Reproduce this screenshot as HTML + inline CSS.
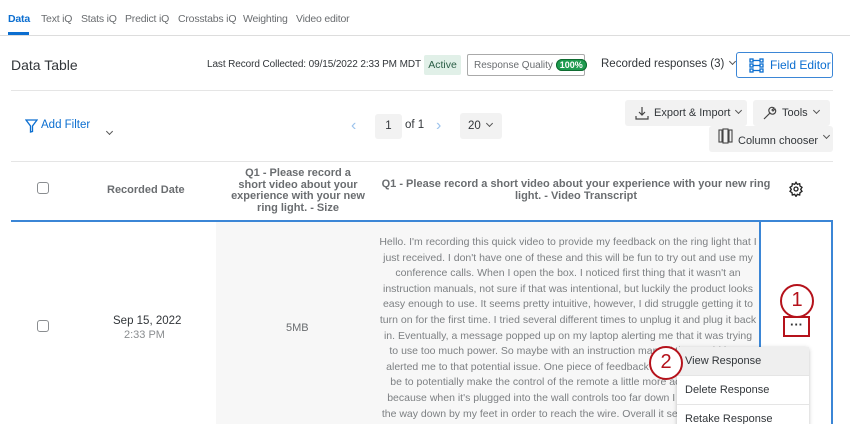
<!DOCTYPE html>
<html><head><meta charset="utf-8"><style>
*{box-sizing:border-box;margin:0;padding:0}
html,body{width:850px;height:424px;overflow:hidden}
body{background:#fff;font-family:"Liberation Sans",Arial,sans-serif;color:#32363a;position:relative}
.a{position:absolute;white-space:nowrap}
.tab{top:13px;font-size:10.5px;color:#6a6d70;letter-spacing:-0.2px}
.btn{position:absolute;background:#f2f2f2;border-radius:3px;font-size:11.5px;color:#32363a;white-space:nowrap}
.chev{display:inline-block;width:5px;height:5px;border-right:1.2px solid #555;border-bottom:1.2px solid #555;transform:rotate(45deg);margin-left:6px;position:relative;top:-3px}
.hdr{font-size:11px;font-weight:bold;color:#6a6d70;text-align:center;line-height:11.5px}
.cb{position:absolute;width:12px;height:12px;border:1px solid #8a8d90;border-radius:3px;background:#fff}
.tr{position:absolute;left:379px;width:378px;top:235px;font-size:10.5px;line-height:15.6px;color:#7d8083;text-align:center}
.menu div{height:29px;line-height:29px;padding-left:8px;font-size:11px;color:#32363a;border-bottom:1px solid #e5e5e5}
.circ{position:absolute;width:34px;height:34px;border:2.5px solid #b5121b;border-radius:50%;background:#fff;color:#b5121b;font-size:20px;text-align:center;line-height:29px}
</style></head><body>
<div class="a tab" style="left:8px;color:#0b6ed0;font-weight:bold">Data</div>
<div style="position:absolute;left:8px;top:32px;width:21px;height:3px;background:#0b6ed0"></div>
<div class="a tab" style="left:41px">Text iQ</div>
<div class="a tab" style="left:81px">Stats iQ</div>
<div class="a tab" style="left:125px">Predict iQ</div>
<div class="a tab" style="left:178px">Crosstabs iQ</div>
<div class="a tab" style="left:243px">Weighting</div>
<div class="a tab" style="left:296px">Video editor</div>
<div style="position:absolute;left:0;top:35px;width:850px;height:1px;background:#ddd"></div>

<div class="a" style="left:11px;top:57px;font-size:14px;color:#32363a">Data Table</div>
<div class="a" style="left:207px;top:59px;font-size:10px;color:#32363a;letter-spacing:-0.1px">Last Record Collected: 09/15/2022 2:33 PM MDT</div>
<div class="a" style="left:424px;top:55px;width:37px;height:20px;background:#e1f0e8;border-radius:2px;font-size:10.5px;line-height:20px;text-align:center;color:#2b5e46">Active</div>
<div class="a" style="left:467px;top:54px;width:118px;height:22px;border:1px solid #aaa;border-radius:2px;font-size:10px;line-height:20px;padding-left:6px;color:#6a6d70">Response Quality <span style="background:#1e9b4f;color:#fff;border-radius:7px;padding:0 3px;font-weight:bold;font-size:9px;border:1px solid #0e6b30">100%</span></div>
<div class="a" style="left:601px;top:58px;font-size:11.5px">Recorded responses (3)<span class="chev"></span></div>
<div class="a" style="left:736px;top:52px;width:97px;height:26px;border:1px solid #3b86d6;border-radius:3px;color:#0b6ed0;font-size:12px;line-height:24px;padding-left:33px">Field Editor</div>
<svg class="a" style="left:749px;top:58px" width="16" height="15" viewBox="0 0 16 15" fill="none" stroke="#0b6ed0" stroke-width="1.3"><rect x="1" y="1" width="3" height="3"/><rect x="1" y="6" width="3" height="3"/><rect x="1" y="11" width="3" height="3"/><rect x="11" y="1" width="3" height="3"/><rect x="11" y="6" width="3" height="3"/><rect x="11" y="11" width="3" height="3"/><path d="M4 2.5h7M4 7.5h7M4 12.5h7"/></svg>
<div style="position:absolute;left:11px;top:90px;width:822px;height:1px;background:#e5e5e5"></div>

<svg class="a" style="left:25px;top:119px" width="13" height="14" viewBox="0 0 13 14" fill="none" stroke="#0b6ed0" stroke-width="1.3"><path d="M1 1h11L7.5 7v5.5L5.5 13V7z"/></svg>
<div class="a" style="left:41px;top:119px;font-size:11.5px;color:#0b6ed0">Add Filter</div>
<span class="a chev" style="left:107px;top:121px;margin:0"></span>
<div class="a" style="left:351px;top:117px;font-size:16px;color:#9cc3ec">‹</div>
<div class="btn" style="left:375px;top:114px;width:27px;height:25px;line-height:25px;text-align:center">1</div>
<div class="a" style="left:405px;top:119px;font-size:11.5px">of 1</div>
<div class="a" style="left:436px;top:117px;font-size:16px;color:#9cc3ec">›</div>
<div class="btn" style="left:460px;top:113px;width:42px;height:26px;line-height:26px;padding-left:8px">20<span class="chev"></span></div>
<div class="btn" style="left:625px;top:100px;width:122px;height:26px;line-height:26px;padding-left:29px;font-size:11px">Export &amp; Import<span class="chev"></span></div>
<svg class="a" style="left:635px;top:106px" width="14" height="14" viewBox="0 0 14 14" fill="none" stroke="#444" stroke-width="1.2"><path d="M7 1v8M4 6l3 3 3-3M1 10v3h12v-3"/></svg>
<div class="btn" style="left:753px;top:100px;width:77px;height:26px;line-height:26px;padding-left:29px;font-size:11px">Tools<span class="chev"></span></div>
<svg class="a" style="left:762px;top:105px" width="16" height="16" viewBox="0 0 16 16" fill="none" stroke="#444" stroke-width="1.2"><path d="M2 14l6-6a3 3 0 0 1 4-5l-2 2 1 1 2-2a3 3 0 0 1-5 4l-6 6z"/></svg>
<div class="btn" style="left:709px;top:126px;width:124px;height:26px;line-height:30px;padding-left:29px;font-size:11px">Column chooser<span class="chev" style="top:-6px"></span></div>
<svg class="a" style="left:718px;top:128px" width="15" height="16" viewBox="0 0 15 16" fill="none" stroke="#444" stroke-width="1.1"><rect x="1" y="2" width="3" height="12"/><rect x="5" y="1" width="5" height="14"/><rect x="11" y="2" width="3" height="12"/></svg>
<div style="position:absolute;left:11px;top:161px;width:822px;height:1px;background:#e5e5e5"></div>

<div class="cb" style="left:37px;top:182px"></div>
<div class="a hdr" style="left:107px;top:185px">Recorded Date</div>
<div class="a hdr" style="left:230px;top:168px;width:136px;white-space:normal">Q1 - Please record a short video about your experience with your new ring light. - Size</div>
<div class="a hdr" style="left:380px;top:179px;width:392px;white-space:normal">Q1 - Please record a short video about your experience with your new ring light. - Video Transcript</div>
<svg class="a" style="left:788px;top:181px" width="16" height="16" viewBox="0 0 24 24" fill="none" stroke="#222" stroke-width="2"><circle cx="12" cy="12" r="3"/><path d="M12 2l2 3 3.5-1 .5 3.5 3 2-2 3 2 3-3 2-.5 3.5-3.5-1-2 3-2-3-3.5 1L6 17.5l-3-2 2-3-2-3 3-2 .5-3.5 3.5 1z"/></svg>

<div style="position:absolute;left:11px;top:220px;width:822px;height:2px;background:#3b86d6"></div>
<div style="position:absolute;left:216px;top:222px;width:544px;height:202px;background:#f7f7f7"></div>
<div class="cb" style="left:37px;top:320px"></div>
<div class="a" style="left:113px;top:315px;font-size:11.5px;color:#32363a">Sep 15, 2022</div>
<div class="a" style="left:124px;top:329px;font-size:11px;color:#8a8d90">2:33 PM</div>
<div class="a" style="left:286px;top:322px;font-size:11px;color:#6a6d70">5MB</div>
<div class="tr">Hello. I'm recording this quick video to provide my feedback on the ring light that I just received. I don't have one of these and this will be fun to try out and use my conference calls. When I open the box. I noticed first thing that it wasn't an instruction manuals, not sure if that was intentional, but luckily the product looks easy enough to use. It seems pretty intuitive, however, I did struggle getting it to turn on for the first time. I tried several different times to unplug it and plug it back in. Eventually, a message popped up on my laptop alerting me that it was trying to use too much power. So maybe with an instruction manual that could have alerted me to that potential issue. One piece of feedback for the product would be to potentially make the control of the remote a little more accessible. itself because when it's plugged into the wall controls too far down I have to lean all the way down by my feet in order to reach the wire. Overall it seems like a pretty easy to use and simple device.</div>
<div style="position:absolute;left:759px;top:220px;width:2px;height:204px;background:#3b86d6"></div>
<div style="position:absolute;left:831px;top:220px;width:2px;height:204px;background:#3b86d6"></div>

<div class="menu" style="position:absolute;left:677px;top:347px;width:132px;height:80px;background:#fff;box-shadow:0 1px 4px rgba(0,0,0,.25);border-radius:3px">
<div style="background:#efefef">View Response</div><div>Delete Response</div><div>Retake Response</div></div>
<div style="position:absolute;left:783px;top:316px;width:27px;height:21px;border:2.5px solid #b5121b;background:#fff;text-align:center;font-size:13px;line-height:13px;font-weight:bold;color:#333">···</div>
<div class="circ" style="left:780px;top:284px">1</div>
<div class="circ" style="left:649px;top:346px">2</div>
</body></html>
